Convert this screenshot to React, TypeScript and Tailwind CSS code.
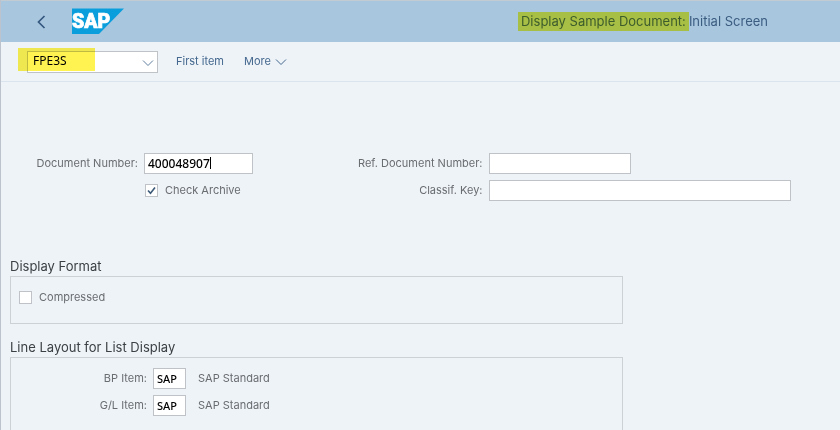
import * as React from "react";

const FIELD =
  "border border-[#bfc3c8] bg-white font-['Noto_Sans','Liberation_Sans',sans-serif] text-black outline-none";
const LABEL = "text-right text-[11px] text-[#6a6d70] whitespace-nowrap";

function SapLogo() {
  return (
    <svg width="52" height="26" viewBox="0 0 52 26" role="img" aria-label="SAP">
      <path d="M0 0.5H52L27 26H0Z" fill="#0a9fdc" />
      <text
        x="0"
        y="20"
        fill="#fff"
        stroke="#fff"
        strokeWidth="0.7"
        fontFamily="Roboto, 'Liberation Sans', sans-serif"
        fontWeight="900"
        fontSize="19.5"
      >
        SAP
      </text>
    </svg>
  );
}

function Chevron({ className }: { className?: string }) {
  return (
    <svg
      width="12"
      height="8"
      viewBox="0 0 12 8"
      fill="none"
      stroke="currentColor"
      strokeWidth="1"
      className={className}
    >
      <path d="M1 1.5L6 6.5L11 1.5" />
    </svg>
  );
}

function CheckBox({
  id,
  label,
  defaultChecked,
}: {
  id: string;
  label: string;
  defaultChecked?: boolean;
}) {
  return (
    <div className="flex h-[21px] items-center gap-[7px]">
      <span className="relative flex">
        <input
          id={id}
          type="checkbox"
          defaultChecked={defaultChecked}
          className="peer size-[13px] appearance-none border border-[#bfc3c8] bg-white"
        />
        <svg
          viewBox="0 0 13 13"
          fill="none"
          stroke="#3c5a78"
          strokeWidth="1.6"
          className="pointer-events-none absolute inset-0 hidden size-[13px] peer-checked:block"
        >
          <path d="M3 6.5L5.5 9.3L10 3.5" />
        </svg>
      </span>
      <label htmlFor={id} className="text-[11px] text-[#6a6d70]">
        {label}
      </label>
    </div>
  );
}

function LayoutRow({ id, label }: { id: string; label: string }) {
  return (
    <div className="flex items-center">
      <label htmlFor={id} className={`${LABEL} w-[136px]`}>
        {label}
      </label>
      <input
        id={id}
        defaultValue="SAP"
        className={`${FIELD} ml-[6px] h-[21px] w-[33px] px-[3px] text-[11px] font-medium`}
      />
      <span className="ml-3 text-[11px] text-[#6a6d70]">SAP Standard</span>
    </div>
  );
}

export default function App() {
  return (
    <div className="flex min-h-screen flex-col border-l border-[#bcc3cc] bg-[#eef3f8] font-['Inter','Liberation_Sans',sans-serif]">
      <header className="flex h-[42px] items-center border-t border-[#c3cbd2] bg-[#a9c6df]">
        <button type="button" aria-label="Back" className="ml-9 text-[#35597f]">
          <svg
            width="9"
            height="14"
            viewBox="0 0 9 14"
            fill="none"
            stroke="currentColor"
            strokeWidth="1.7"
          >
            <path d="M7.5 1L1.5 7L7.5 13" />
          </svg>
        </button>
        <div className="ml-[26px] pb-[2px]">
          <SapLogo />
        </div>
        <h1 className="mr-[72px] ml-auto flex items-center text-[13px] text-[#3b5d80]">
          <mark className="bg-[#a8bf45] pr-[3px] pl-[3px] leading-[19px] text-[#3c5c2c]">
            Display Sample Document:
          </mark>
          Initial Screen
        </h1>
      </header>

      <div className="flex h-10 items-center border-b border-[#dae4ef] pl-[26px] text-[11px] text-[#44688e]">
        <div className="relative">
          <select
            aria-label="Transaction code"
            className={`${FIELD} block h-[22px] w-[131px] appearance-none px-[5px] pb-[2px] text-xs`}
          >
            <option>FPE3S</option>
          </select>
          <Chevron className="pointer-events-none absolute top-2 right-1 text-[#5f7f9f]" />
          <span className="pointer-events-none absolute -top-[3px] -left-[9px] h-[23px] w-[77px] bg-[#fff352] mix-blend-multiply" />
        </div>
        <button type="button" className="ml-[18px]">
          First item
        </button>
        <button type="button" className="ml-5 flex items-center gap-1">
          More
          <Chevron />
        </button>
      </div>

      <main className="flex flex-1 flex-col pt-[71px] pl-[9px]">
        <div className="flex items-start gap-[105px] pr-[49px]">
          <div className="grid grid-cols-[128px_109px] gap-x-[6px] gap-y-[6px]">
            <label htmlFor="doc" className={`${LABEL} self-center`}>
              Document Number:
            </label>
            <div className="relative">
              <input
                id="doc"
                defaultValue="400048907"
                className={`${FIELD} block h-[21px] w-full px-[3px] text-xs font-medium`}
              />
              <span className="absolute top-1 left-[66px] h-3 w-px bg-black" />
            </div>
            <div className="col-start-2 pl-px">
              <CheckBox id="archive" label="Check Archive" defaultChecked />
            </div>
          </div>

          <div className="grid flex-1 grid-cols-[auto_1fr] items-center gap-x-[6px] gap-y-[6px]">
            <label htmlFor="ref" className={LABEL}>
              Ref. Document Number:
            </label>
            <input id="ref" className={`${FIELD} h-[21px] w-[142px] px-1 text-xs`} />
            <label htmlFor="key" className={LABEL}>
              Classif. Key:
            </label>
            <input id="key" className={`${FIELD} h-[21px] w-full px-1 text-xs`} />
          </div>
        </div>

        <section className="mt-14 w-full max-w-[613px]">
          <h2 className="text-[13px] leading-[19px] text-[#3b4044]">
            Display Format
          </h2>
          <div className="h-12 border border-[#ccd1d6] pt-[10px] pl-2">
            <CheckBox id="compressed" label="Compressed" />
          </div>
        </section>

        <section className="mt-[14px] flex w-full max-w-[613px] flex-1 flex-col">
          <h2 className="text-[13px] leading-[19px] text-[#3b4044]">
            Line Layout for List Display
          </h2>
          <div className="flex flex-1 flex-col gap-[6px] border border-b-0 border-[#ccd1d6] pt-[10px]">
            <LayoutRow id="bp" label="BP Item:" />
            <LayoutRow id="gl" label="G/L Item:" />
          </div>
        </section>
      </main>
    </div>
  );
}
